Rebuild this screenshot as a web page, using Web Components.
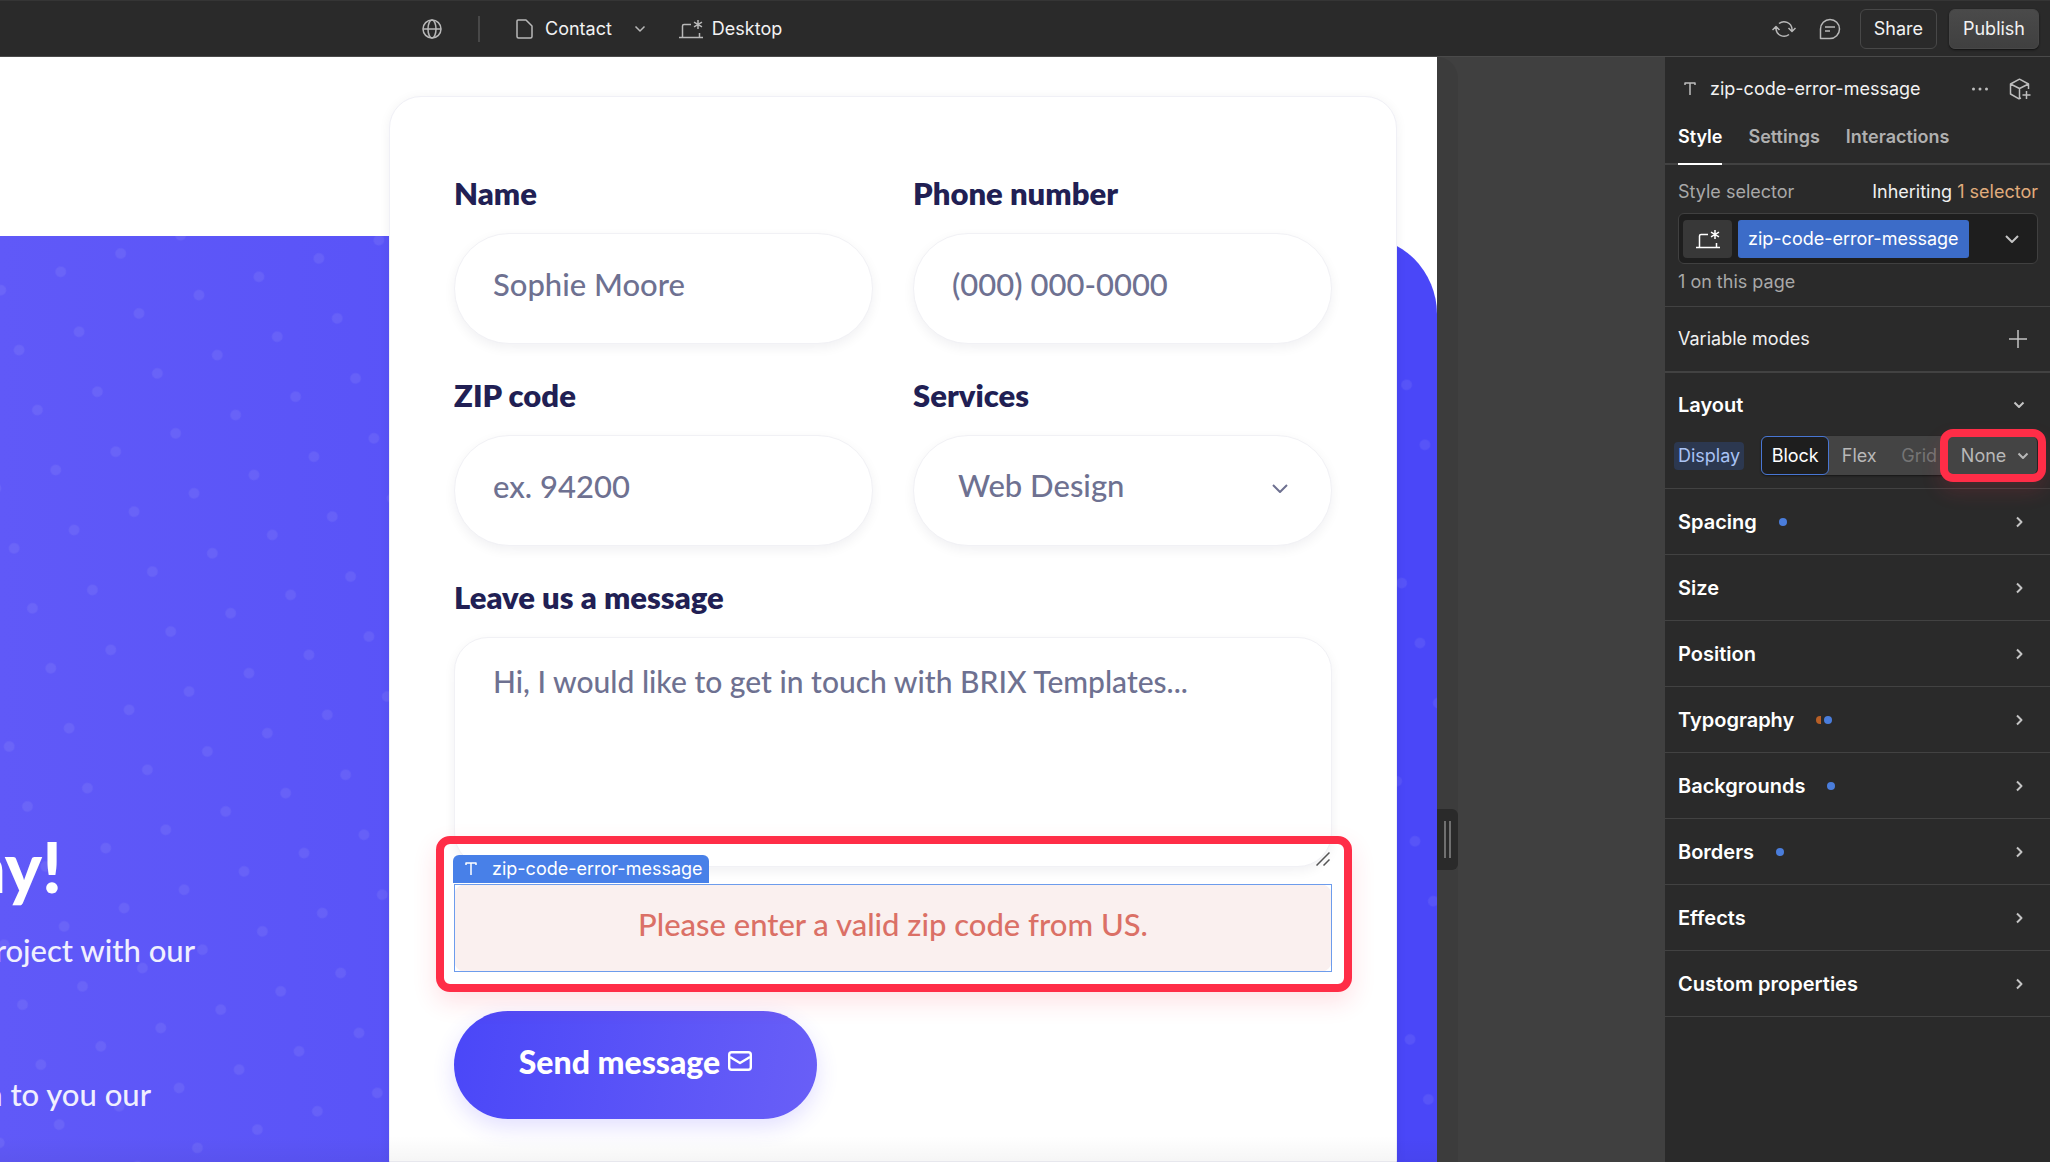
<!DOCTYPE html>
<html lang="en">
<head>
<meta charset="utf-8">
<title>Contact</title>
<style>
  body {
    margin: 0;
    background: #404040;
    font-family: Inter, "Liberation Sans", sans-serif;
  }
</style>
</head>
<body>
<designer-app></designer-app>

<script>
const ICONS = {
  globe: [20, 20, '<circle cx="10" cy="10" r="9"/><ellipse cx="10" cy="10" rx="4" ry="9"/><path d="M1 10h18"/>'],
  page: [17, 20, '<path d="M2 1h8l6 6v10.500q0 1.500-1.500 1.500H2.500Q1 19 1 17.500V2q0-1 1-1z"/>'],
  laptop: [26, 20, '<path d="M1 18.500h24M4.500 18V7q0-1.500 1.500-1.500h7M21.500 18v-4"/><path d="M20 1v9M16 3.200l8 4.600M24 3.200l-8 4.600"/>'],
  down: [12, 8, '<path d="M1.500 1.500 6 6l4.500-4.500"/>'],
  bigdown: [16, 10, '<path d="M2 2l6 6 6-6"/>'],
  thindown: [16, 10, '<path d="M1 1l7 7 7-7"/>'],
  right: [12, 12, '<path d="M4 1.500 8.500 6 4 10.500"/>'],
  plus: [18, 18, '<path d="M9 0v18M0 9h18"/>'],
  dots: [18, 4, '<g fill="currentColor" stroke="none"><circle cx="2.500" cy="2" r="1.500"/><circle cx="9" cy="2" r="1.500"/><circle cx="15.500" cy="2" r="1.500"/></g>'],
  type: [12, 14, '<path d="M1 3V1h10v2M6 1v12"/>'],
  sync: [24, 18, '<path d="M7 3.500A8 8 0 0 1 20 9v2M16.500 8l3.500 3.500L23.500 8M17 14.500A8 8 0 0 1 4 9V7M.500 10 4 6.500 7.500 10"/>'],
  comment: [22, 22, '<path d="M1.500 20.500V11A9.500 9.500 0 1 1 11 20.500zM6 9h10M6 13h5"/>'],
  cube: [22, 22, '<path d="M12 20l-2 .800L1.500 16V6L10.500 1.200 19.500 6v5M1.500 6l9 4.500 9-4.500M10.500 10.500V20.500M17.500 13v8M13.500 17h8"/>'],
  mail: [24, 20, '<rect x="1.200" y="1.200" width="21.600" height="17.600" rx="2.500"/><path d="M2 6l10 6 10-6"/>'],
  grip: [14, 14, '<path d="M.500 13.500l13-13M7.500 13.500l6-6"/>'],
};

class UiIcon extends HTMLElement {
  constructor() {
    super();
    this.attachShadow({ mode: 'open' });
  }

  connectedCallback() {
    const [w, h, body] = ICONS[this.getAttribute('name')];
    this.shadowRoot.innerHTML = `
      <style>
        :host { display: inline-flex; flex: none; }
        svg { display: block; fill: none; stroke: currentColor; stroke-width: var(--stroke, 1.500); stroke-linejoin: round; }
      </style>
      <svg width="${w}" height="${h}" viewBox="0 0 ${w} ${h}" aria-hidden="true">${body}</svg>
    `;
  }
}

class TopBar extends HTMLElement {
  constructor() {
    super();
    this.attachShadow({ mode: 'open' });
    this.shadowRoot.innerHTML = `
      <style>
        :host {
          display: flex;
          align-items: center;
          justify-content: space-between;
          box-sizing: border-box;
          height: 57px;
          padding: 0 11px 0 422px;
          background: #2a2a2a;
          border-top: 1px solid #353535;
          border-bottom: 1px solid #4a4a4a;
          color: #f2f2f2;
          font-size: 18px;
          line-height: 24px;
        }
        nav, .actions { display: flex; align-items: center; }
        ui-icon { color: #b8b8b8; }
        button {
          display: flex;
          align-items: center;
          padding: 0;
          border: 0;
          background: none;
          color: inherit;
          font: inherit;
        }
        .line { width: 2px; height: 26px; margin: 0 36px; background: #484848; }
        .page { gap: 12px; margin-right: 32px; }
        .page ui-icon:last-child { margin-left: 10px; }
        .view { gap: 8px; }
        .actions { gap: 12px; }
        .tool { width: 32px; justify-content: center; margin-right: 2px; }
        .box {
          justify-content: center;
          box-sizing: border-box;
          height: 40px;
          padding: 0 13px;
          border: 1px solid #484848;
          border-radius: 6px;
        }
        .main {
          background: linear-gradient(#4a4a4a, #404040);
          box-shadow: 0 1px 2px #111;
        }
      </style>
      <nav>
        <button aria-label="Locale"><ui-icon name="globe"></ui-icon></button>
        <span class="line"></span>
        <button class="page"><ui-icon name="page"></ui-icon>Contact<ui-icon name="down"></ui-icon></button>
        <button class="view"><ui-icon name="laptop"></ui-icon>Desktop</button>
      </nav>
      <div class="actions">
        <button class="tool" aria-label="Sync"><ui-icon name="sync"></ui-icon></button>
        <button class="tool" aria-label="Comments"><ui-icon name="comment"></ui-icon></button>
        <button class="box">Share</button>
        <button class="box main">Publish</button>
      </div>
    `;
  }
}

class FormField extends HTMLElement {
  constructor() {
    super();
    this.attachShadow({ mode: 'open' });
  }

  connectedCallback() {
    const hint = this.getAttribute('hint');
    const controls = {
      text: `<input id="control" type="text" placeholder="${hint}">`,
      area: `<textarea id="control" placeholder="${hint}"></textarea><ui-icon class="grip" name="grip"></ui-icon>`,
      select: `<select id="control"><option>${hint}</option></select><ui-icon class="arrow" name="thindown"></ui-icon>`,
    };
    this.shadowRoot.innerHTML = `
      <style>
        :host { display: grid; gap: 24px; min-width: 0; }
        label { color: #211f54; font-size: 31px; font-weight: 800; line-height: 32px; }
        .box { display: grid; align-items: center; }
        .box > * { grid-area: 1 / 1; }
        input, select, textarea {
          box-sizing: border-box;
          width: 100%;
          height: 111px;
          margin: 0;
          padding: 0 38px 10px;
          border: 1px solid #f1f1f5;
          border-radius: 55px;
          outline: 0;
          background: #fff;
          box-shadow: 0 4px 12px rgba(20, 20, 43, .06);
          color: #6e7191;
          font: inherit;
          font-weight: 500;
          font-size: 31px;
          line-height: 40px;
        }
        ::placeholder { color: #6e7191; opacity: 1; }
        select { appearance: none; padding: 0 44px 12px; }
        textarea {
          display: block;
          height: 230px;
          padding-top: 23px;
          border-radius: 34px;
          font-size: 30px;
          resize: none;
        }
        ui-icon { justify-self: end; pointer-events: none; }
        .arrow { margin: 0 44px 4px 0; color: #6e7191; --stroke: 2; }
        .grip { align-self: end; margin: 0 2px 1px 0; color: #555; }
      </style>
      <label for="control">${this.getAttribute('label')}</label>
      <div class="box">${controls[this.getAttribute('type') || 'text']}</div>
    `;
  }
}

class SelectedMessage extends HTMLElement {
  constructor() {
    super();
    this.attachShadow({ mode: 'open' });
    this.shadowRoot.innerHTML = `
      <style>
        :host { display: block; position: relative; outline: 1px solid #6d9cec; outline-offset: -1px; background: #fff; }
        p {
          box-sizing: border-box;
          height: 88px;
          margin: 0;
          padding: 20px 24px 28px;
          border-radius: 12px;
          background: #faf0ef;
          color: #db7066;
          font-size: 31px;
          font-weight: 500;
          line-height: 40px;
          text-align: center;
        }
        .tag {
          position: absolute;
          left: -1px;
          bottom: 100%;
          display: flex;
          align-items: center;
          gap: 15px;
          height: 28px;
          margin-bottom: 1px;
          padding: 0 6px 0 12px;
          border-radius: 6px 6px 0 0;
          background: #4880e8;
          color: #fff;
          font: 18px/28px Inter, sans-serif;
        }
        .frame {
          position: absolute;
          inset: -48px -20px -20px -18px;
          border: 8px solid #ff2d47;
          border-radius: 14px;
          box-shadow: 0 10px 24px rgba(255, 45, 71, .14);
        }
      </style>
      <p><slot></slot></p>
      <span class="tag"><ui-icon name="type"></ui-icon>zip-code-error-message</span>
      <div class="frame"></div>
    `;
  }
}

class ContactSite extends HTMLElement {
  constructor() {
    super();
    this.attachShadow({ mode: 'open' });
    this.shadowRoot.innerHTML = `
      <style>
        :host {
          display: grid;
          grid-template: 179px 1fr / 389px 1fr 40px;
          position: relative;
          overflow: hidden;
          background: #fff;
          font-family: Lato, sans-serif;
        }
        .hero {
          grid-area: 2 / 1 / 3 / 4;
          border-radius: 0 78px 0 0;
          background: linear-gradient(90deg, #6059f8, #4a47f8 1300px);
          overflow: hidden;
        }
        .hero svg { display: block; width: 100%; height: 100%; }
        .copy {
          grid-area: 2 / 1;
          padding-top: 580px;
          overflow: hidden;
          color: #f0effe;
          font-size: 31px;
          font-weight: 500;
          line-height: 48px;
          white-space: nowrap;
          z-index: 1;
        }
        .copy > * { display: flex; justify-content: flex-end; margin: 0; }
        h1 { width: 62px; color: #fff; font-size: 70px; font-weight: 900; line-height: 100px; }
        p { width: 195px; padding-top: 10px; }
        p.last { width: 151px; margin-top: 86px; }
        form {
          grid-area: 1 / 2 / 3 / 3;
          z-index: 1;
          box-sizing: border-box;
          margin-top: 39px;
          padding: 80px 64px 0;
          border: 1px solid #f0f0f6;
          border-radius: 32px 32px 0 0;
          background: #fff;
          box-shadow: 0 2px 12px rgba(20, 20, 43, .06);
        }
        .fields {
          display: grid;
          grid-template-columns: 1fr 1fr;
          gap: 35px 40px;
          margin-bottom: 17px;
        }
        .wide { grid-column: 1 / 3; }
        button {
          display: flex;
          align-items: center;
          justify-content: center;
          gap: 8px;
          width: 363px;
          height: 108px;
          margin-top: 39px;
          padding: 0 0 8px;
          border: 0;
          border-radius: 54px;
          background: linear-gradient(100deg, #4a47f8, #695ff7);
          box-shadow: 0 8px 22px rgba(74, 58, 255, .16);
          color: #fff;
          font: inherit;
          font-size: 32px;
          font-weight: 900;
          --stroke: 2.400;
        }
        .fade {
          position: absolute;
          inset: auto 0 0;
          height: 26px;
          z-index: 2;
          background: linear-gradient(transparent, rgba(0, 0, 0, .04));
        }
      </style>
      <div class="hero">
        <svg aria-hidden="true">
          <defs>
            <pattern id="dots" width="62.700" height="62.700" patternUnits="userSpaceOnUse" patternTransform="translate(60.700 35.700) rotate(-17) translate(-31.350 -31.350)">
              <circle cx="31.350" cy="31.350" r="5.300" fill="#fff" fill-opacity=".07"/>
            </pattern>
          </defs>
          <rect width="100%" height="100%" fill="url(#dots)"/>
        </svg>
      </div>
      <div class="copy">
        <h1>ay!</h1>
        <p>roject with our</p>
        <p class="last">n to you our</p>
      </div>
      <form>
        <div class="fields">
          <form-field label="Name" hint="Sophie Moore"></form-field>
          <form-field label="Phone number" hint="(000) 000-0000"></form-field>
          <form-field label="ZIP code" hint="ex. 94200"></form-field>
          <form-field label="Services" hint="Web Design" type="select"></form-field>
          <form-field class="wide" label="Leave us a message" hint="Hi, I would like to get in touch with BRIX Templates..." type="area"></form-field>
        </div>
        <selected-message>Please enter a valid zip code from US.</selected-message>
        <button type="button">Send message<ui-icon name="mail"></ui-icon></button>
      </form>
      <div class="fade"></div>
    `;
  }
}

class CanvasGutter extends HTMLElement {
  constructor() {
    super();
    this.attachShadow({ mode: 'open' });
    this.shadowRoot.innerHTML = `
      <style>
        :host { display: flex; background: #404040; }
        .edge {
          display: flex;
          align-items: flex-start;
          width: 21px;
          border-radius: 0 21px 0 0;
          background: #3c3c3c;
        }
        button {
          display: flex;
          align-items: center;
          justify-content: center;
          gap: 3px;
          width: 22px;
          height: 61px;
          margin-top: 752px;
          padding: 0;
          border: 0;
          border-radius: 0 6px 6px 0;
          background: #2a2a2a;
        }
        i { width: 2px; height: 37px; background: #707070; }
      </style>
      <div class="edge"><button aria-label="Resize canvas"><i></i><i></i></button></div>
    `;
  }
}

class PanelSection extends HTMLElement {
  constructor() {
    super();
    this.attachShadow({ mode: 'open' });
  }

  connectedCallback() {
    const dots = (this.getAttribute('dots') || '').split(' ').filter(Boolean);
    const open = this.hasAttribute('open');
    this.shadowRoot.innerHTML = `
      <style>
        :host { display: block; border-bottom: 1px solid #424242; }
        button {
          display: flex;
          align-items: center;
          width: 100%;
          height: 65px;
          padding: 0 25px 0 13px;
          border: 0;
          background: none;
          color: #fff;
          font: inherit;
          font-size: 20px;
          font-weight: 600;
        }
        :host([open]) button { height: 63px; }
        .dots { display: flex; flex: 1; padding-left: 22px; }
        .dots i { width: 8px; height: 8px; border-radius: 50%; background: #4a7ddb; }
        .dots i.orange { width: 5px; margin-right: 3px; border-radius: 4px 0 0 4px; background: #b85f26; }
        ui-icon { color: #c4c4c4; --stroke: 2; }
      </style>
      <button aria-expanded="${open}">
        <span>${this.getAttribute('label')}</span>
        <span class="dots">${dots.map((d) => `<i class="${d}"></i>`).join('')}</span>
        <ui-icon name="${open ? 'down' : 'right'}"></ui-icon>
      </button>
      <slot></slot>
    `;
  }
}

class DisplayPicker extends HTMLElement {
  constructor() {
    super();
    this.attachShadow({ mode: 'open' });
    this.shadowRoot.innerHTML = `
      <style>
        :host { display: flex; align-items: center; padding: 0 13px 13px 9px; font-size: 18px; line-height: 24px; }
        .name { padding: 2px 4px; border-radius: 4px; background: #2c3850; color: #a9c3f5; }
        .group {
          display: flex;
          flex: 1;
          position: relative;
          height: 39px;
          margin-left: 17px;
          border-radius: 6px;
          background: #444;
          box-shadow: 0 1px 2px #151515;
        }
        button {
          display: flex;
          align-items: center;
          justify-content: center;
          gap: 11px;
          width: 60px;
          padding: 0;
          border: 0;
          background: none;
          color: #b8b8b8;
          font: inherit;
        }
        .on { width: 68px; border: 1px solid #4876d4; border-radius: 6px; background: #1e1e1e; color: #fff; }
        .dim { color: #757575; }
        .more { flex: 1; padding-left: 4px; --stroke: 2; }
        .frame {
          position: absolute;
          inset: -7px -9px -7px auto;
          width: 90px;
          border: 8px solid #ff2d47;
          border-radius: 13px;
          box-shadow: 0 10px 20px rgba(255, 45, 71, .14);
        }
      </style>
      <span class="name">Display</span>
      <div class="group">
        <button class="on">Block</button>
        <button>Flex</button>
        <button class="dim">Grid</button>
        <button class="more">None<ui-icon name="down"></ui-icon></button>
        <div class="frame"></div>
      </div>
    `;
  }
}

class StylePanel extends HTMLElement {
  constructor() {
    super();
    this.attachShadow({ mode: 'open' });
    this.shadowRoot.innerHTML = `
      <style>
        :host {
          display: block;
          background: #2a2a2a;
          color: #f0f0f0;
          font-size: 18px;
          line-height: 24px;
        }
        button { padding: 0; border: 0; background: none; color: inherit; font: inherit; }
        header, .tabs, .row, .selector { display: flex; align-items: center; }
        header { gap: 14px; height: 64px; padding: 0 19px; color: #bdbdbd; }
        header span { flex: 1; color: #f2f2f2; }
        header button { display: flex; margin-left: 6px; }
        .tabs { gap: 26px; height: 42px; padding: 0 13px; border-bottom: 2px solid #424242; }
        .tabs button { height: 42px; padding-bottom: 10px; color: #b0b0b0; font-weight: 600; }
        .tabs .on { box-shadow: 0 2px #fff; color: #fff; }
        .selectors { padding: 15px 12px 12px 13px; border-bottom: 1px solid #424242; color: #a8a8a8; }
        .row { justify-content: space-between; }
        .row span { color: #f0f0f0; }
        a { color: #e0ac7c; text-decoration: none; }
        .selector {
          gap: 6px;
          box-sizing: border-box;
          height: 51px;
          margin: 9px 0 6px;
          padding: 0 17px 0 4px;
          border: 1px solid #404040;
          border-radius: 6px;
          background: #1e1e1e;
        }
        .state { display: flex; align-items: center; justify-content: center; width: 49px; height: 38px; border-radius: 4px; background: #383838; color: #fff; }
        .class { height: 38px; padding: 0 10px; border-radius: 3px; background: #3c6cc8; color: #fff; }
        .selector > ui-icon { margin-left: auto; color: #c4c4c4; --stroke: 2; }
        .modes { height: 64px; padding: 0 23px 0 13px; border-bottom: 2px solid #424242; }
        .modes button { display: flex; color: #c4c4c4; }
      </style>
      <header>
        <ui-icon name="type"></ui-icon>
        <span>zip-code-error-message</span>
        <button aria-label="More"><ui-icon name="dots"></ui-icon></button>
        <button aria-label="Create component"><ui-icon name="cube"></ui-icon></button>
      </header>
      <div class="tabs">
        <button class="on">Style</button>
        <button>Settings</button>
        <button>Interactions</button>
      </div>
      <div class="selectors">
        <div class="row">Style selector <span>Inheriting <a href="#">1 selector</a></span></div>
        <div class="selector">
          <button class="state" aria-label="States"><ui-icon name="laptop"></ui-icon></button>
          <button class="class">zip-code-error-message</button>
          <ui-icon name="bigdown"></ui-icon>
        </div>
        <div>1 on this page</div>
      </div>
      <div class="row modes"><span>Variable modes</span><button aria-label="Add mode"><ui-icon name="plus"></ui-icon></button></div>
      <panel-section label="Layout" open><display-picker></display-picker></panel-section>
      <panel-section label="Spacing" dots="blue"></panel-section>
      <panel-section label="Size"></panel-section>
      <panel-section label="Position"></panel-section>
      <panel-section label="Typography" dots="orange blue"></panel-section>
      <panel-section label="Backgrounds" dots="blue"></panel-section>
      <panel-section label="Borders" dots="blue"></panel-section>
      <panel-section label="Effects"></panel-section>
      <panel-section label="Custom properties"></panel-section>
    `;
  }
}

class DesignerApp extends HTMLElement {
  constructor() {
    super();
    this.attachShadow({ mode: 'open' });
    this.shadowRoot.innerHTML = `
      <style>
        :host { display: grid; grid-template-rows: auto 1fr; height: 100vh; overflow: hidden; }
        main { display: grid; grid-template-columns: 1fr 228px 385px; min-height: 0; }
      </style>
      <top-bar></top-bar>
      <main>
        <contact-site></contact-site>
        <canvas-gutter></canvas-gutter>
        <style-panel></style-panel>
      </main>
    `;
  }
}

customElements.define('ui-icon', UiIcon);
customElements.define('top-bar', TopBar);
customElements.define('form-field', FormField);
customElements.define('selected-message', SelectedMessage);
customElements.define('contact-site', ContactSite);
customElements.define('canvas-gutter', CanvasGutter);
customElements.define('panel-section', PanelSection);
customElements.define('display-picker', DisplayPicker);
customElements.define('style-panel', StylePanel);
customElements.define('designer-app', DesignerApp);
</script>
</body>
</html>
